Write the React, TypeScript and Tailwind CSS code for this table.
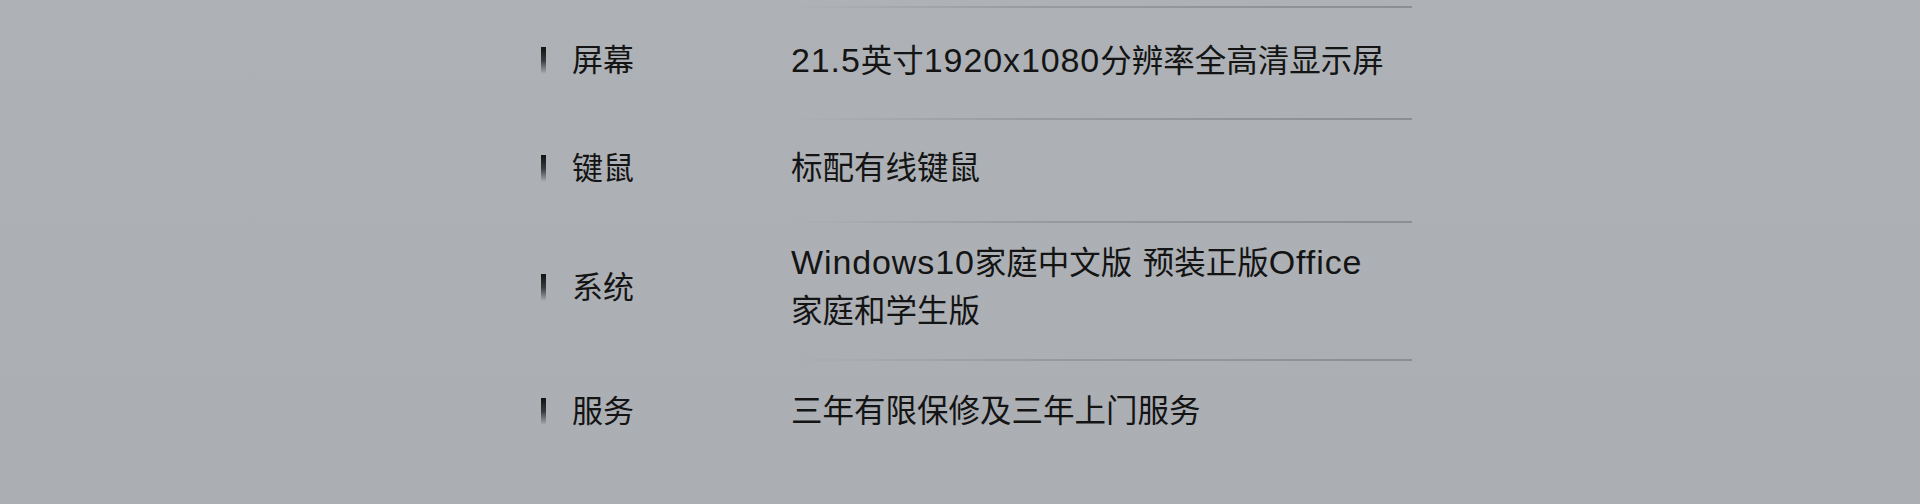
import React from "react";

const font = {
  fontFamily: '"Liberation Sans", "Noto Sans CJK SC", sans-serif',
};

function Line() {
  return (
    <div className="ml-[250px] h-[2px] w-[621px] bg-gradient-to-r from-transparent via-[#979b9f] via-40% to-[#8b8f93]" />
  );
}

function Mixed({ text }: { text: string }) {
  const parts = text.match(/[\u4e00-\u9fff]+|[^\u4e00-\u9fff]+/g) || [];
  return (
    <>
      {parts.map((p, i) =>
        /[\u4e00-\u9fff]/.test(p) ? (
          <span key={i}>{p}</span>
        ) : (
          <span key={i} className="text-[34px] tracking-[0.9px]">
            {p}
          </span>
        )
      )}
    </>
  );
}

function Row({
  label,
  lines,
  cls,
}: {
  label: string;
  lines: string[];
  cls: string;
}) {
  return (
    <div className={`flex ${cls}`}>
      <div className="flex w-[250px] shrink-0 items-center self-start" style={{ height: lines.length * 49 }}>
        <div className="mr-[26px] h-[27px] w-[5px] bg-gradient-to-b from-[#121212] via-[#3a3b3d] via-50% to-transparent" />
        <span className="text-[31px] leading-[49px] text-[#141414]">{label}</span>
      </div>
      <div className="flex flex-col">
        {lines.map((l, i) => (
          <span key={i} className="h-[49px] whitespace-nowrap text-[31.5px] leading-[49px] text-[#141414]">
            <Mixed text={l} />
          </span>
        ))}
      </div>
    </div>
  );
}

export default function App() {
  return (
    <div
      className="h-[504px] w-[1920px] overflow-hidden bg-gradient-to-b from-[#aeb2b6] to-[#abafb3]"
      style={font}
    >
      <div className="pl-[541px] pt-[6px]">
        <Line />
        <Row label="屏幕" lines={["21.5英寸1920x1080分辨率全高清显示屏"]} cls="h-[110px] pt-[28px]" />
        <Line />
        <Row label="键鼠" lines={["标配有线键鼠"]} cls="h-[101px] pt-[24px]" />
        <Line />
        <Row
          label="系统"
          lines={["Windows10家庭中文版 预装正版Office", "家庭和学生版"]}
          cls="h-[136px] pt-[15px]"
        />
        <Line />
        <Row label="服务" lines={["三年有限保修及三年上门服务"]} cls="h-[120px] pt-[26px]" />
      </div>
    </div>
  );
}
